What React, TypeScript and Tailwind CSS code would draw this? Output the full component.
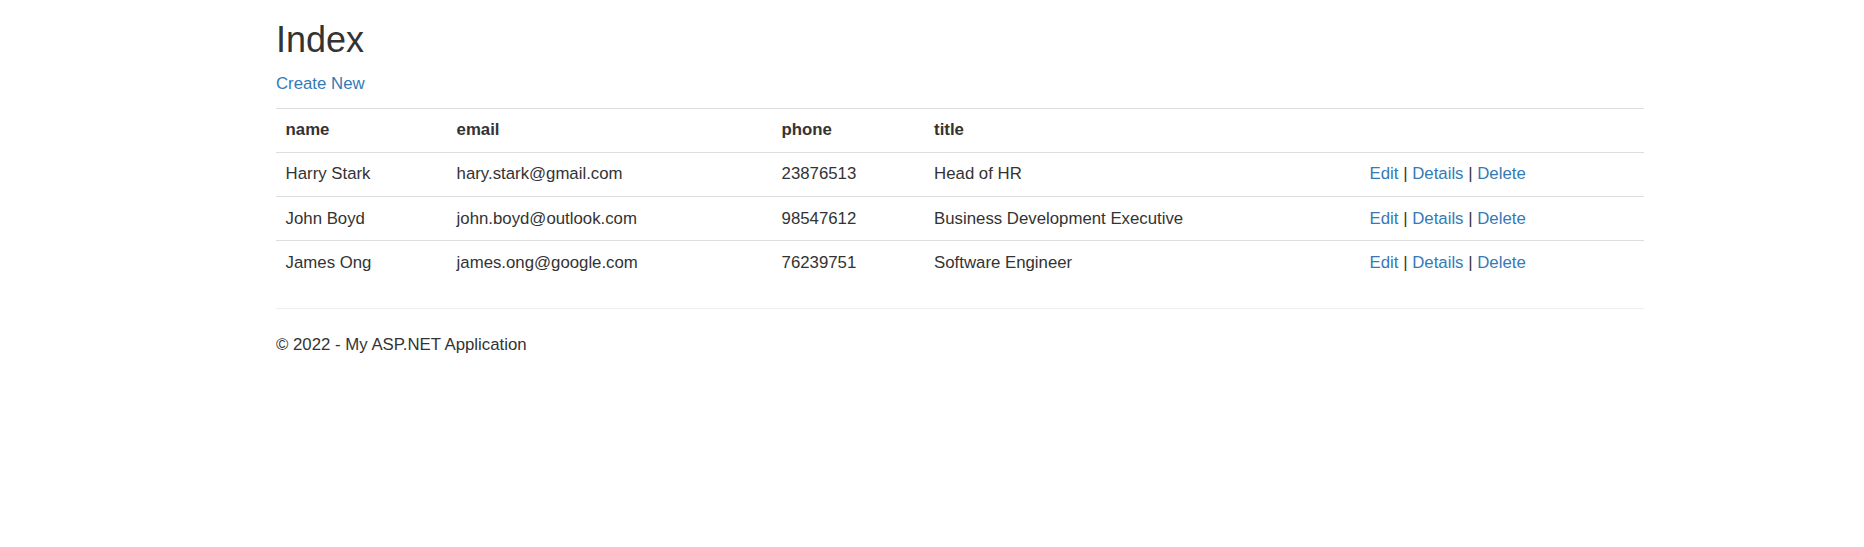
const people = [
  { name: "Harry Stark", email: "hary.stark@gmail.com", phone: "23876513", title: "Head of HR" },
  { name: "John Boyd", email: "john.boyd@outlook.com", phone: "98547612", title: "Business Development Executive" },
  { name: "James Ong", email: "james.ong@google.com", phone: "76239751", title: "Software Engineer" },
];

const cell = "h-[44.2px] px-[9.6px] py-0 border-t border-[#dddddd] align-middle text-left";

export default function App() {
  return (
    <div className="min-h-[547px] bg-white text-[#333333] text-[16.8px] leading-[24px] font-['Liberation_Sans',Arial,sans-serif]">
      <div className="ml-[276px] w-[1368px] pt-[20px]">
        <h2 className="text-[36px] leading-[39.6px] font-normal mb-[12px]">Index</h2>
        <p className="mb-[12px]">
          <a href="#" className="text-[#337ab7]">Create New</a>
        </p>

        <table className="w-[1368px] table-fixed border-collapse mb-[23px]">
          <colgroup>
            <col className="w-[171px]" />
            <col className="w-[325px]" />
            <col className="w-[152.5px]" />
            <col className="w-[435.5px]" />
            <col className="w-[284px]" />
          </colgroup>
          <tbody>
            <tr>
              <th className={`${cell} font-bold`}>name</th>
              <th className={`${cell} font-bold`}>email</th>
              <th className={`${cell} font-bold`}>phone</th>
              <th className={`${cell} font-bold`}>title</th>
              <th className={cell}></th>
            </tr>
            {people.map((p) => (
              <tr key={p.phone}>
                <td className={cell}>{p.name}</td>
                <td className={cell}>{p.email}</td>
                <td className={cell}>{p.phone}</td>
                <td className={cell}>{p.title}</td>
                <td className={cell}>
                  <a href="#" className="text-[#337ab7]">Edit</a> |{" "}
                  <a href="#" className="text-[#337ab7]">Details</a> |{" "}
                  <a href="#" className="text-[#337ab7]">Delete</a>
                </td>
              </tr>
            ))}
          </tbody>
        </table>

        {/* Footer */}
        <hr className="border-0 border-t border-[#eeeeee] mb-[24px]" />
        <footer>
          <p>© 2022 - My ASP.NET Application</p>
        </footer>
      </div>
    </div>
  );
}
